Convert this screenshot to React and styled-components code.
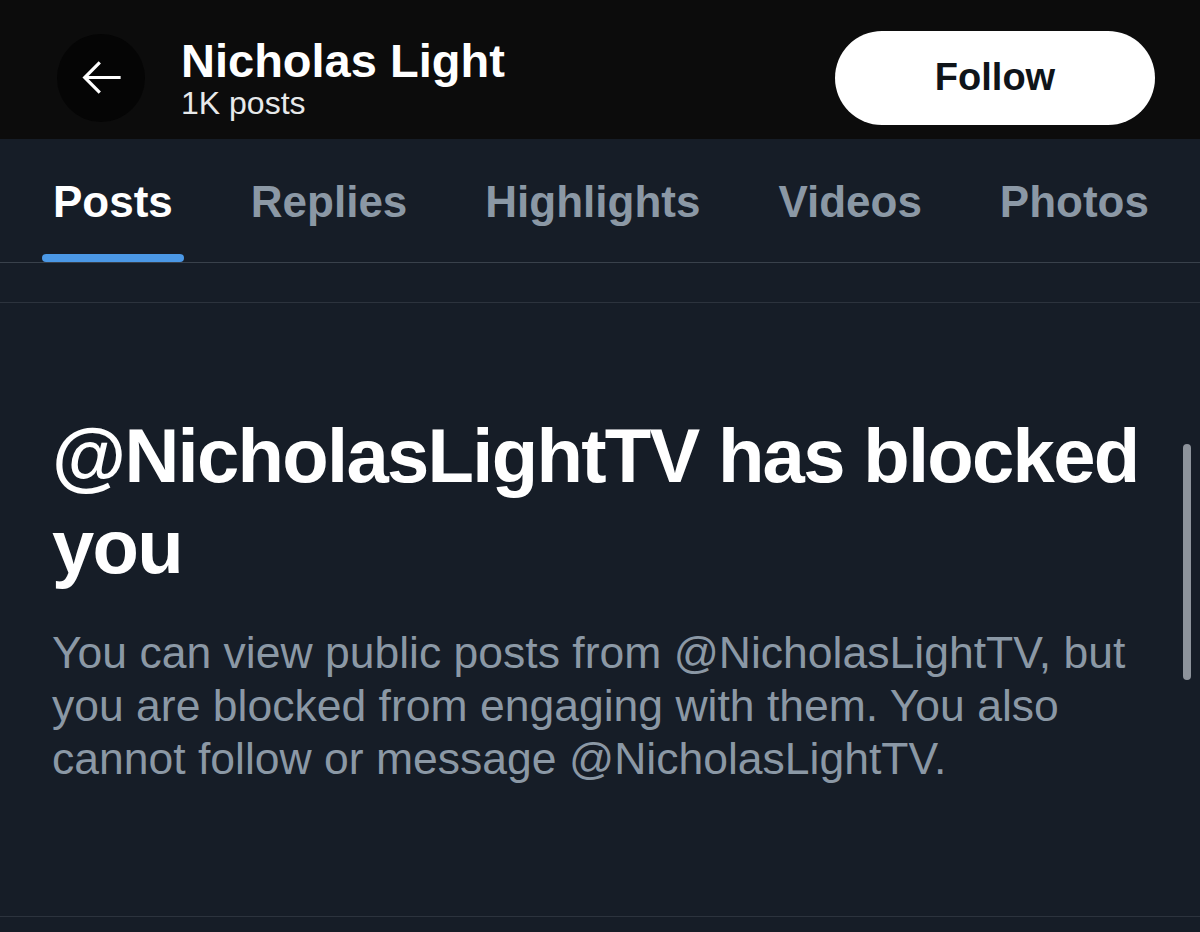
import React from "react";
import styled, { createGlobalStyle } from "styled-components";

const Global = createGlobalStyle`
  html, body {
    margin: 0;
    padding: 0;
    background: #161d27;
  }
  body {
    font-family: "Liberation Sans", Arial, sans-serif;
    -webkit-font-smoothing: antialiased;
  }
`

const Page = styled.div`
  position: relative;
  width: 1200px;
  height: 932px;
  overflow: hidden;
  background: #161d27;
`

const Header = styled.header`
  box-sizing: border-box;
  height: 139px;
  padding: 16px 45px 0 57px;
  display: flex;
  align-items: center;
  background: #0c0c0c;
`

const BackButton = styled.div`
  width: 88px;
  height: 88px;
  border-radius: 50%;
  background: #050505;
  display: flex;
  align-items: center;
  justify-content: center;
  flex-shrink: 0;
`

const NameBlock = styled.div`
  margin-left: 36px;
  display: flex;
  flex-direction: column;
  flex: 1;
`

const Name = styled.div`
  font-size: 47px;
  line-height: 50px;
  font-weight: 700;
  color: #ffffff;
`

const PostCount = styled.div`
  font-size: 32px;
  line-height: 34px;
  color: #e7e9ea;
`

const FollowButton = styled.button`
  width: 320px;
  height: 94px;
  border: none;
  border-radius: 47px;
  background: #ffffff;
  color: #0f1419;
  font-family: inherit;
  font-size: 38px;
  font-weight: 700;
  cursor: pointer;
`

const Tabs = styled.nav`
  box-sizing: border-box;
  height: 124px;
  padding: 0 40px 0 42px;
  display: flex;
  justify-content: space-between;
  border-bottom: 1px solid #39414b;
`

const Tab = styled.div`
  display: flex;
  flex-direction: column;
  align-items: stretch;
  padding-top: 38px;
`

const TabLabel = styled.div`
  padding: 0 11px;
  font-size: 44px;
  line-height: 50px;
  font-weight: 700;
  color: ${(props) => (props.active ? "#ffffff" : "#8b98a5")};
  text-align: center;
`

const TabBar = styled.div`
  margin-top: 27px;
  height: 8px;
  border-radius: 4px;
  background: ${(props) => (props.active ? "#4b98e6" : "transparent")};
`

const Spacer = styled.div`
  height: 39px;
  border-bottom: 1px solid #2c333d;
`

const Notice = styled.section`
  padding: 107px 50px 131px 52px;
  border-bottom: 1px solid #2c333d;
`

const Title = styled.h1`
  margin: 0;
  font-size: 76px;
  line-height: 91px;
  font-weight: 800;
  letter-spacing: -1.7px;
  color: #ffffff;
`

const Body = styled.p`
  margin: 34px 0 0;
  font-size: 44.5px;
  line-height: 53px;
  font-weight: 400;
  color: #8b98a5;
`

const Scrollbar = styled.div`
  position: absolute;
  left: 1183px;
  top: 444px;
  width: 8px;
  height: 236px;
  border-radius: 4px;
  background: #8d939b;
`

const BackArrow = () => (
  <svg width="51" height="51" viewBox="0 0 24 24" fill="none" stroke="#ffffff" strokeWidth="1.5">
    <path d="M21 12H4.5" />
    <path d="M11.2 4.9L4.1 12l7.1 7.1" />
  </svg>
)

const tabs = ["Posts", "Replies", "Highlights", "Videos", "Photos"];

const App = () => {
  return (
    <>
      <Global />
      <Page>
        <Header>
          <BackButton>
            <BackArrow />
          </BackButton>
          <NameBlock>
            <Name>Nicholas Light</Name>
            <PostCount>1K posts</PostCount>
          </NameBlock>
          <FollowButton>Follow</FollowButton>
        </Header>
        <Tabs>
          {tabs.map((t, i) => (
            <Tab key={t}>
              <TabLabel active={i === 0}>{t}</TabLabel>
              <TabBar active={i === 0} />
            </Tab>
          ))}
        </Tabs>
        <Spacer />
        <Notice>
          <Title>@NicholasLightTV has blocked you</Title>
          <Body>
            You can view public posts from @NicholasLightTV, but you are blocked from engaging with them. You also
            cannot follow or message @NicholasLightTV.
          </Body>
        </Notice>
        <Scrollbar />
      </Page>
    </>
  )
}

export default App;
